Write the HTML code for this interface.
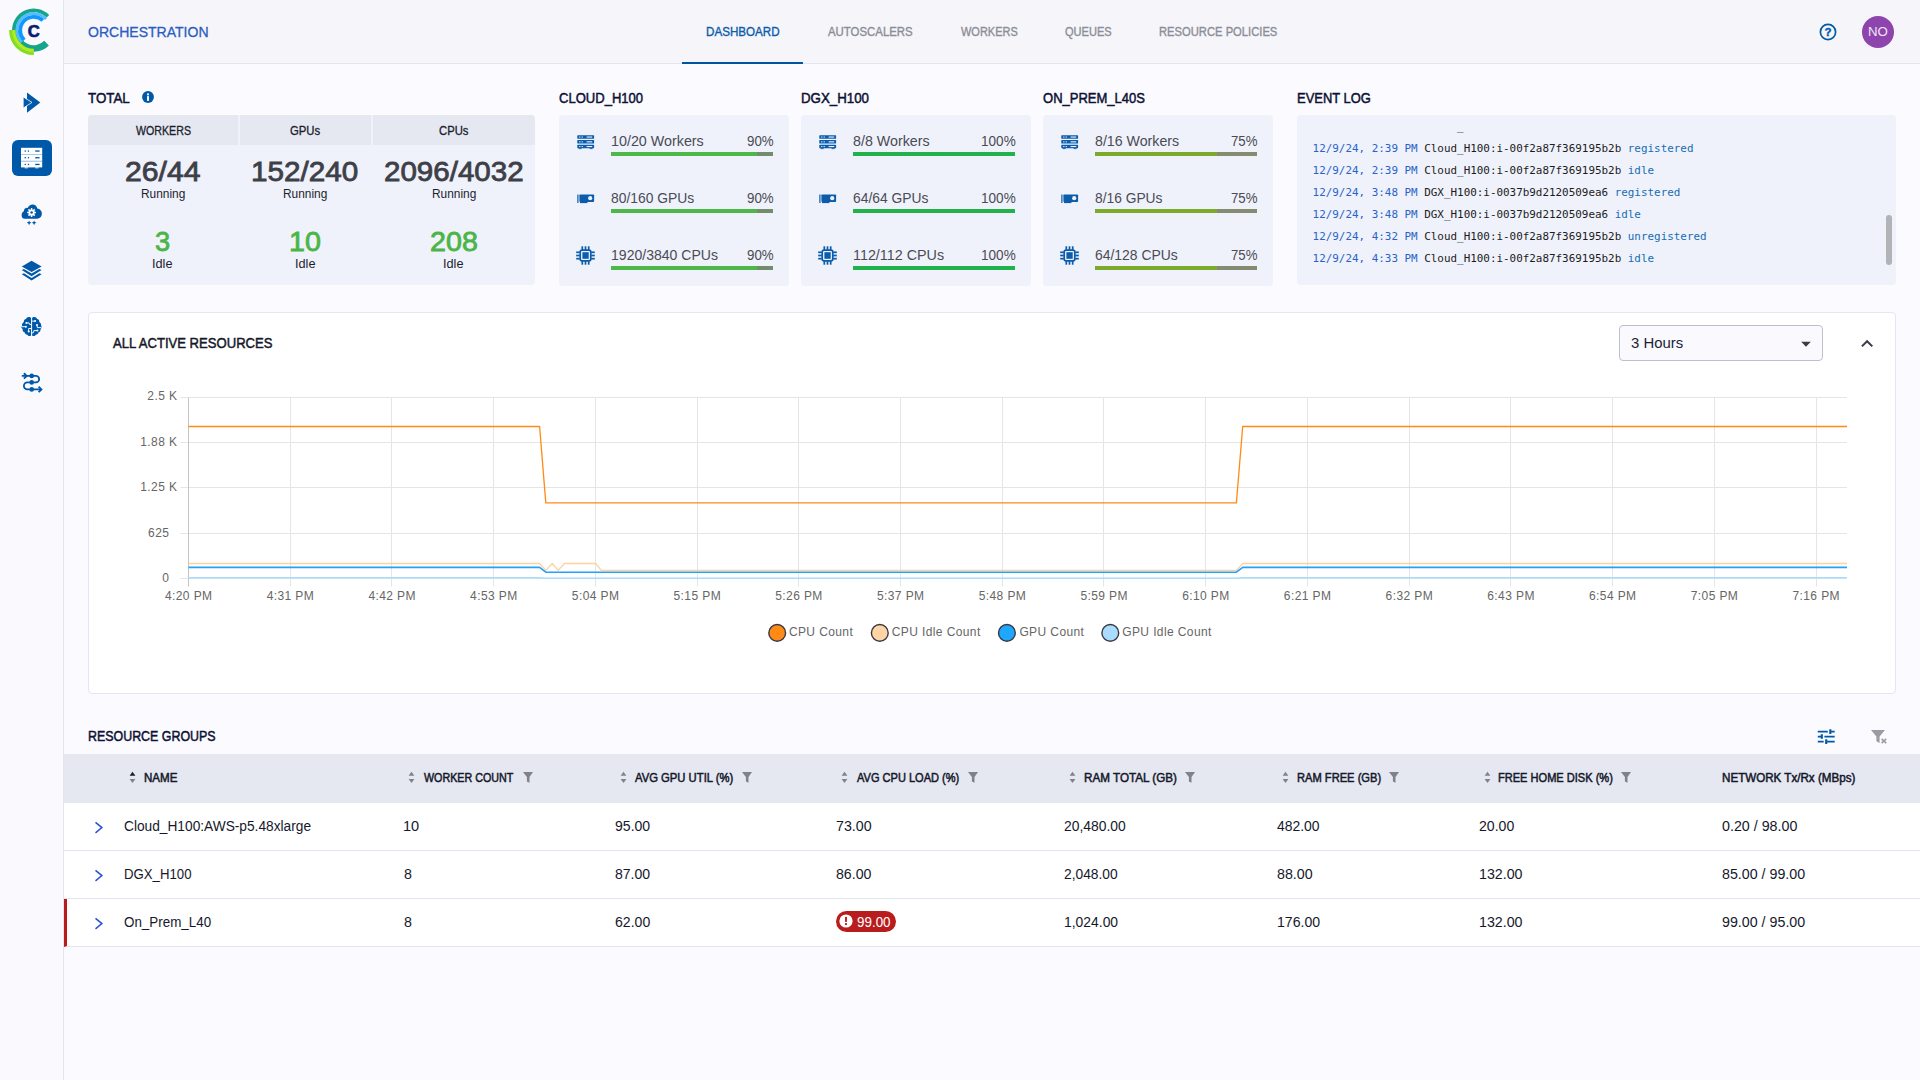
<!DOCTYPE html>
<html lang="en"><head><meta charset="utf-8"><title>Orchestration Dashboard</title>
<style>
*{box-sizing:border-box}
html,body{margin:0;padding:0}
body{width:1920px;height:1080px;overflow:hidden;position:relative;background:#fafaff;font-family:'Liberation Sans',sans-serif;}
div,aside,header,section,nav,svg.a{position:absolute}
.t{position:absolute;display:block;white-space:nowrap;transform-origin:0 0}
.m{font-family:'DejaVu Sans Mono','Liberation Mono',monospace}
</style></head>
<body>
<aside style="left:0;top:0;width:64px;height:1080px;background:#f9f9fe;border-right:1px solid #e3e6f0"><svg class="a" style="left:4px;top:4px" width="56" height="56" viewBox="4 4 56 56">
<g fill="none" transform="translate(33.8,30.4)">
<path d="M14.11,-14.11A19.95,19.95 0 0 0 -19.95,0.35" stroke="#17a589" stroke-width="3.7"/>
<path d="M-18.05,-0.32A18.05,18.05 0 0 0 12.76,12.76" stroke="#17a589" stroke-width="6.5"/>
<path d="M12.21,-11.39A16.7,16.7 0 1 0 -12.01,11.60" stroke="#54bdff" stroke-width="2.9"/>
<path d="M9.03,-10.03A13.5,13.5 0 0 0 -9.55,9.55" stroke="#0d99ff" stroke-width="3.7"/>
<path d="M-23.05,-0.40A23.05,23.05 0 0 0 0.00,23.05" stroke="#80e01e" stroke-width="3.2"/>
<path d="M-19.95,-0.35A19.95,19.95 0 0 0 0.00,19.95" stroke="#b5ea1c" stroke-width="3.1"/>
</g>
<text x="33.7" y="37.3" text-anchor="middle" font-family="'Liberation Sans',sans-serif" font-weight="700" font-size="16.6" fill="#0c1d6b" stroke="#0c1d6b" stroke-width="0.7">C</text>
</svg>
<svg class="a" style="left:12px;top:84px" width="40" height="36" viewBox="12 84 40 36">
<path d="M27,92.4 L40.3,102.4 L27,112.8Z" fill="#0059a8"/>
<path d="M23.2,96.9 L32.0,102.4 L23.2,108.1Z" fill="#0059a8" stroke="#f9f9fe" stroke-width="0.8"/>
</svg>
<div style="left:12px;top:140px;width:40px;height:36px;border-radius:6px;background:#0059a8">
<svg class="a" style="left:0;top:0" width="40" height="36" viewBox="12 140 40 36">
<rect x="21" y="147.8" width="21.2" height="6.3" fill="#fff"/>
<rect x="21" y="154.6" width="21.2" height="6.3" fill="#fff"/>
<rect x="21" y="161.4" width="21.2" height="6.0" fill="#fff"/>
<rect x="21" y="154.1" width="21.2" height="0.6" fill="#cfe2f3"/>
<rect x="21" y="160.9" width="21.2" height="0.6" fill="#cfe2f3"/>
<rect x="24.6" y="167.4" width="3.4" height="0.9" fill="#fff"/><rect x="35.2" y="167.4" width="3.4" height="0.9" fill="#fff"/>
<g fill="#0059a8">
<rect x="24.6" y="150.4" width="1.3" height="1.3"/><rect x="27.8" y="150.4" width="1.3" height="1.3"/><rect x="35.2" y="150.4" width="4.4" height="1.3"/>
<rect x="24.6" y="157.1" width="1.3" height="1.3"/><rect x="27.8" y="157.1" width="1.3" height="1.3"/><rect x="35.2" y="157.1" width="4.4" height="1.3"/>
<rect x="24.6" y="163.8" width="1.3" height="1.3"/><rect x="27.8" y="163.8" width="1.3" height="1.3"/><rect x="35.2" y="163.8" width="4.4" height="1.3"/>
</g></svg></div>
<svg class="a" style="left:12px;top:196px" width="40" height="36" viewBox="12 196 40 36">
<path d="M24.6,218.8C22.6,218.8 21.5,217 21.6,215C21.7,213.2 22.6,212 23.9,211.3C23.7,209.3 25.5,207.6 27.8,207.9C28.6,205.9 30.4,204.5 32.6,204.5C35,204.5 36.8,206.2 37.3,208.4C40,208.6 41.9,210.9 41.9,213.6C41.9,216.5 39.8,218.8 37.2,218.8Z" fill="#0059a8"/>
<g transform="translate(31.6,212.5)"><circle r="3.1" fill="#fff"/>
<g stroke="#fff" stroke-width="1.5"><path d="M0,-4.4V4.4M-4.4,0H4.4M-3.1,-3.1L3.1,3.1M-3.1,3.1L3.1,-3.1"/></g>
<circle r="1.25" fill="#0059a8"/></g>
<path d="M29.1,220.4l0.7,1.7l1.7,0.7l-1.7,0.7l-0.7,1.7l-0.7,-1.7l-1.7,-0.7l1.7,-0.7Z M34.1,220.4l0.7,1.7l1.7,0.7l-1.7,0.7l-0.7,1.7l-0.7,-1.7l-1.7,-0.7l1.7,-0.7Z" fill="#0059a8"/>
</svg>
<svg class="a" style="left:12px;top:252px" width="40" height="36" viewBox="12 252 40 36">
<path d="M31.6,260.7 L41.6,266.5 L31.6,272 L21.8,266.5Z" fill="#0059a8"/>
<path d="M21.8,269.9 L23.9,269.0 L31.6,273.6 L39.4,269.0 L41.6,269.9 L31.6,276.2Z" fill="#0059a8"/>
<path d="M21.8,274.2 L23.9,273.3 L31.6,277.9 L39.4,273.3 L41.6,274.2 L31.6,280.6Z" fill="#0059a8"/>
</svg>
<svg class="a" style="left:12px;top:308px" width="40" height="36" viewBox="12 308 40 36">
<g fill="#0059a8"><path d="M31.05,318.3C31.05,317.3 29.8,316.9 28.7,316.9C27.2,316.9 26.2,317.9 26.1,319.1C24.5,319.2 23.5,320.6 23.9,322.1C22.4,322.9 21.6,324.6 22.1,326.0C21.0,326.6 21.2,328.3 22.6,329.0C22.4,330.9 23.3,332.0 24.6,332.3C24.9,334.0 26.2,334.9 27.4,334.8C28.0,336.2 29.6,336.5 31.05,335.5Z"/><path d="M31.05,318.3C31.05,317.3 29.8,316.9 28.7,316.9C27.2,316.9 26.2,317.9 26.1,319.1C24.5,319.2 23.5,320.6 23.9,322.1C22.4,322.9 21.6,324.6 22.1,326.0C21.0,326.6 21.2,328.3 22.6,329.0C22.4,330.9 23.3,332.0 24.6,332.3C24.9,334.0 26.2,334.9 27.4,334.8C28.0,336.2 29.6,336.5 31.05,335.5Z" transform="translate(63.15,0) scale(-1,1)"/></g>
<g stroke="#fff" stroke-width="0.95" fill="none"><path d="M26.4,322.9H29.1L29.7,324.5H31.0M21.6,326.7H25.8M28.7,331.4V328.5H31.0M35.0,321.1H32.1M37.0,325.2L37.3,327.6H41.4M37.3,330.6H33.9L33.2,332.9H32.1"/></g>
<g fill="#fff"><circle cx="26.4" cy="322.9" r="1.0"/><circle cx="25.9" cy="326.7" r="1.0"/><circle cx="28.7" cy="331.5" r="1.0"/><circle cx="35.1" cy="321.1" r="1.0"/><circle cx="37.0" cy="325.1" r="1.0"/><circle cx="37.4" cy="330.6" r="1.0"/></g>
</svg>
<svg class="a" style="left:12px;top:364px" width="40" height="36" viewBox="12 364 40 36">
<path d="M21.8,375.9H35.9a3.25,3.25 0 0 1 0,6.5H27.4a3.5,3.5 0 0 0 0,7.0H40.4" fill="none" stroke="#0059a8" stroke-width="1.8"/>
<g fill="#0059a8"><circle cx="31.7" cy="375.9" r="2.3"/><circle cx="31.7" cy="382.4" r="2.3"/><circle cx="31.7" cy="389.4" r="2.3"/></g>
<path d="M23.9,373.2L26.7,375.9L23.9,378.6M38.6,386.6L41.4,389.4L38.6,392.2" fill="none" stroke="#0059a8" stroke-width="1.9"/>
</svg></aside>
<header style="left:64px;top:0;width:1856px;height:64px;background:#f5f5fa;border-bottom:1px solid #e3e6f0"><span class="t" style="left:23.98px;top:23.00px;font-size:15px;line-height:17px;color:#2a5cc2;transform:scaleX(0.9350);-webkit-text-stroke:0.3px #2a5cc2;">ORCHESTRATION</span><nav style="left:0;top:0;width:100%;height:64px"><span class="t" style="left:641.96px;top:25.00px;font-size:12.3px;line-height:14px;color:#0b5cab;transform:scaleX(0.9456);-webkit-text-stroke:0.35px #0b5cab;">DASHBOARD</span><span class="t" style="left:763.64px;top:25.00px;font-size:12.3px;line-height:14px;color:#8b8d97;transform:scaleX(0.9272);-webkit-text-stroke:0.35px #8b8d97;">AUTOSCALERS</span><span class="t" style="left:896.61px;top:25.00px;font-size:12.3px;line-height:14px;color:#8b8d97;transform:scaleX(0.8926);-webkit-text-stroke:0.35px #8b8d97;">WORKERS</span><span class="t" style="left:1001.14px;top:25.00px;font-size:12.3px;line-height:14px;color:#8b8d97;transform:scaleX(0.8991);-webkit-text-stroke:0.35px #8b8d97;">QUEUES</span><span class="t" style="left:1095.24px;top:25.00px;font-size:12.3px;line-height:14px;color:#8b8d97;transform:scaleX(0.9114);-webkit-text-stroke:0.35px #8b8d97;">RESOURCE POLICIES</span><div style="left:618px;top:62px;width:121px;height:2px;background:#00539f"></div></nav><svg class="a" style="left:1754.3px;top:22.4px" width="20" height="20" viewBox="-10 -10 20 20">
<circle r="7.6" fill="none" stroke="#0059a8" stroke-width="1.7"/>
<text x="0" y="4.1" text-anchor="middle" font-family="'Liberation Sans',sans-serif" font-weight="700" font-size="11.5" fill="#0059a8" stroke="#0059a8" stroke-width="0.35">?</text></svg><div style="left:1798px;top:16px;width:32px;height:32px;border-radius:50%;background:#8e44ad"><span class="t" style="left:5.82px;top:9.00px;font-size:12px;line-height:14px;color:#f3e6f8;transform:scaleX(1.1010);">NO</span></div></header>
<section style="left:0;top:0"><span class="t" style="left:88.43px;top:88.75px;font-size:15px;line-height:17px;color:#0d1133;transform:scaleX(0.8901);-webkit-text-stroke:0.5px #0d1133;">TOTAL</span><svg class="a" style="left:141.2px;top:90px" width="14" height="14" viewBox="-7 -7 14 14"><circle r="5.95" fill="#0059a8"/><rect x="-0.95" y="-0.9" width="1.9" height="4.8" fill="#fff"/><circle cy="-2.6" r="1.05" fill="#fff"/></svg><div style="left:88px;top:115px;width:447px;height:170px;background:#eff2fb;border-radius:4px"><div style="left:0px;top:0;width:150px;height:30px;background:#e5e8f1;border-radius:4px 0 0 0;"><span class="t" style="left:47.84px;top:9.00px;font-size:12px;line-height:14px;color:#1b1e2e;transform:scaleX(0.8871);-webkit-text-stroke:0.3px #1b1e2e;">WORKERS</span></div><span class="t" style="left:36.93px;top:41.25px;font-size:27.4px;line-height:31px;color:#3e4047;transform:scaleX(1.1014);-webkit-text-stroke:0.8px #3e4047;">26/44</span><span class="t" style="left:52.78px;top:71.25px;font-size:13px;line-height:15px;color:#1b1e2e;transform:scaleX(0.9134);">Running</span><span class="t" style="left:67.11px;top:111.00px;font-size:27.4px;line-height:31px;color:#4cb548;transform:scaleX(0.9953);-webkit-text-stroke:0.8px #4cb548;">3</span><span class="t" style="left:64.46px;top:141.00px;font-size:13px;line-height:15px;color:#1b1e2e;transform:scaleX(0.9772);">Idle</span><div style="left:152px;top:0;width:131px;height:30px;background:#e5e8f1;"><span class="t" style="left:50.08px;top:9.00px;font-size:12px;line-height:14px;color:#1b1e2e;transform:scaleX(0.9433);-webkit-text-stroke:0.3px #1b1e2e;">GPUs</span></div><span class="t" style="left:163.43px;top:41.25px;font-size:27.4px;line-height:31px;color:#3e4047;transform:scaleX(1.0829);-webkit-text-stroke:0.8px #3e4047;">152/240</span><span class="t" style="left:195.28px;top:71.25px;font-size:13px;line-height:15px;color:#1b1e2e;transform:scaleX(0.9134);">Running</span><span class="t" style="left:200.74px;top:111.00px;font-size:27.4px;line-height:31px;color:#4cb548;transform:scaleX(1.0481);-webkit-text-stroke:0.8px #4cb548;">10</span><span class="t" style="left:206.96px;top:141.00px;font-size:13px;line-height:15px;color:#1b1e2e;transform:scaleX(0.9772);">Idle</span><div style="left:285px;top:0;width:162px;height:30px;background:#e5e8f1;border-radius:0 4px 0 0;"><span class="t" style="left:66.08px;top:9.00px;font-size:12px;line-height:14px;color:#1b1e2e;transform:scaleX(0.9395);-webkit-text-stroke:0.3px #1b1e2e;">CPUs</span></div><span class="t" style="left:295.95px;top:41.25px;font-size:27.4px;line-height:31px;color:#3e4047;transform:scaleX(1.0778);-webkit-text-stroke:0.8px #3e4047;">2096/4032</span><span class="t" style="left:343.78px;top:71.25px;font-size:13px;line-height:15px;color:#1b1e2e;transform:scaleX(0.9134);">Running</span><span class="t" style="left:341.73px;top:111.00px;font-size:27.4px;line-height:31px;color:#4cb548;transform:scaleX(1.0465);-webkit-text-stroke:0.8px #4cb548;">208</span><span class="t" style="left:355.46px;top:141.00px;font-size:13px;line-height:15px;color:#1b1e2e;transform:scaleX(0.9772);">Idle</span></div></section>
<section style="left:0;top:0"><span class="t" style="left:559.32px;top:88.75px;font-size:15px;line-height:17px;color:#0d1133;transform:scaleX(0.8693);-webkit-text-stroke:0.5px #0d1133;">CLOUD_H100</span><div style="left:559px;top:115px;width:230px;height:171px;background:#eff2fb;border-radius:4px"><svg class="a" style="left:17.600000000000023px;top:19.599999999999994px" width="18" height="15" viewBox="0 0 18 15">
<g fill="#0b5cab"><rect x="0.3" y="0.2" width="16.8" height="3.6" rx="0.6"/><rect x="0.3" y="5.0" width="16.8" height="3.6" rx="0.6"/><rect x="0.3" y="9.8" width="16.8" height="3.4" rx="0.6"/>
<rect x="1.6" y="13.2" width="3.0" height="0.9"/><rect x="12.6" y="13.2" width="3.0" height="0.9"/></g>
<g fill="#eef1fb"><rect x="2.2" y="1.5" width="1.2" height="1.1"/><rect x="4.6" y="1.5" width="1.2" height="1.1"/><rect x="9.6" y="1.5" width="5.6" height="1.1"/>
<rect x="2.2" y="6.3" width="1.2" height="1.1"/><rect x="4.6" y="6.3" width="1.2" height="1.1"/><rect x="9.6" y="6.3" width="5.6" height="1.1"/>
<rect x="2.2" y="11.0" width="1.2" height="1.1"/><rect x="4.6" y="11.0" width="1.2" height="1.1"/><rect x="9.6" y="11.0" width="5.6" height="1.1"/></g></svg><span class="t" style="left:51.81px;top:18.00px;font-size:14.4px;line-height:16px;color:#4a4b53;transform:scaleX(0.9939);">10/20 Workers</span><span class="t" style="left:187.89px;top:18.00px;font-size:14.4px;line-height:16px;color:#4a4b53;transform:scaleX(0.9259);">90%</span><div style="left:52px;top:37px;width:162.2px;height:4px;background:#748c6e"><div style="left:0;top:0;height:4px;width:146.0px;background:#4db848"></div></div><svg class="a" style="left:18.0px;top:78.80000000000001px" width="18" height="10" viewBox="0 0 18 10">
<g fill="#0b5cab"><rect x="0.3" y="0.5" width="1.2" height="8.5"/><rect x="2.4" y="0.4" width="14.7" height="7.6" rx="0.9"/><rect x="3.0" y="7.8" width="7.4" height="1.3"/></g>
<circle cx="13.2" cy="4.2" r="2.1" fill="#eef1fb"/></svg><span class="t" style="left:52.30px;top:75.00px;font-size:14.4px;line-height:16px;color:#4a4b53;transform:scaleX(0.9624);">80/160 GPUs</span><span class="t" style="left:187.89px;top:75.00px;font-size:14.4px;line-height:16px;color:#4a4b53;transform:scaleX(0.9259);">90%</span><div style="left:52px;top:94px;width:162.2px;height:4px;background:#748c6e"><div style="left:0;top:0;height:4px;width:146.0px;background:#4db848"></div></div><svg class="a" style="left:17.0px;top:131.3px" width="19" height="19" viewBox="0 0 19 19">
<g fill="#0b5cab"><rect x="5.45" y="0.3" width="1.7" height="3.6"/><rect x="5.45" y="15.1" width="1.7" height="3.6"/><rect x="0.2" y="5.45" width="3.6" height="1.7"/><rect x="15.2" y="5.45" width="3.6" height="1.7"/><rect x="8.65" y="0.3" width="1.7" height="3.6"/><rect x="8.65" y="15.1" width="1.7" height="3.6"/><rect x="0.2" y="8.65" width="3.6" height="1.7"/><rect x="15.2" y="8.65" width="3.6" height="1.7"/><rect x="11.85" y="0.3" width="1.7" height="3.6"/><rect x="11.85" y="15.1" width="1.7" height="3.6"/><rect x="0.2" y="11.85" width="3.6" height="1.7"/><rect x="15.2" y="11.85" width="3.6" height="1.7"/></g>
<rect x="4.2" y="4.2" width="10.6" height="10.6" rx="1.9" fill="#eff2fb" stroke="#0b5cab" stroke-width="1.7"/>
<rect x="6.4" y="6.2" width="6.3" height="6.6" fill="#0b5cab"/></svg><span class="t" style="left:51.83px;top:132.00px;font-size:14.4px;line-height:16px;color:#4a4b53;transform:scaleX(0.9763);">1920/3840 CPUs</span><span class="t" style="left:187.89px;top:132.00px;font-size:14.4px;line-height:16px;color:#4a4b53;transform:scaleX(0.9259);">90%</span><div style="left:52px;top:151px;width:162.2px;height:4px;background:#748c6e"><div style="left:0;top:0;height:4px;width:146.0px;background:#4db848"></div></div></div></section><section style="left:0;top:0"><span class="t" style="left:800.88px;top:88.75px;font-size:15px;line-height:17px;color:#0d1133;transform:scaleX(0.8865);-webkit-text-stroke:0.5px #0d1133;">DGX_H100</span><div style="left:801px;top:115px;width:230px;height:171px;background:#eff2fb;border-radius:4px"><svg class="a" style="left:17.600000000000023px;top:19.599999999999994px" width="18" height="15" viewBox="0 0 18 15">
<g fill="#0b5cab"><rect x="0.3" y="0.2" width="16.8" height="3.6" rx="0.6"/><rect x="0.3" y="5.0" width="16.8" height="3.6" rx="0.6"/><rect x="0.3" y="9.8" width="16.8" height="3.4" rx="0.6"/>
<rect x="1.6" y="13.2" width="3.0" height="0.9"/><rect x="12.6" y="13.2" width="3.0" height="0.9"/></g>
<g fill="#eef1fb"><rect x="2.2" y="1.5" width="1.2" height="1.1"/><rect x="4.6" y="1.5" width="1.2" height="1.1"/><rect x="9.6" y="1.5" width="5.6" height="1.1"/>
<rect x="2.2" y="6.3" width="1.2" height="1.1"/><rect x="4.6" y="6.3" width="1.2" height="1.1"/><rect x="9.6" y="6.3" width="5.6" height="1.1"/>
<rect x="2.2" y="11.0" width="1.2" height="1.1"/><rect x="4.6" y="11.0" width="1.2" height="1.1"/><rect x="9.6" y="11.0" width="5.6" height="1.1"/></g></svg><span class="t" style="left:52.29px;top:18.00px;font-size:14.4px;line-height:16px;color:#4a4b53;transform:scaleX(0.9906);">8/8 Workers</span><span class="t" style="left:179.87px;top:18.00px;font-size:14.4px;line-height:16px;color:#4a4b53;transform:scaleX(0.9426);">100%</span><div style="left:52px;top:37px;width:162.2px;height:4px;background:#748c6e"><div style="left:0;top:0;height:4px;width:162.2px;background:#21b24b"></div></div><svg class="a" style="left:18.0px;top:78.80000000000001px" width="18" height="10" viewBox="0 0 18 10">
<g fill="#0b5cab"><rect x="0.3" y="0.5" width="1.2" height="8.5"/><rect x="2.4" y="0.4" width="14.7" height="7.6" rx="0.9"/><rect x="3.0" y="7.8" width="7.4" height="1.3"/></g>
<circle cx="13.2" cy="4.2" r="2.1" fill="#eef1fb"/></svg><span class="t" style="left:52.21px;top:75.00px;font-size:14.4px;line-height:16px;color:#4a4b53;transform:scaleX(0.9612);">64/64 GPUs</span><span class="t" style="left:179.87px;top:75.00px;font-size:14.4px;line-height:16px;color:#4a4b53;transform:scaleX(0.9426);">100%</span><div style="left:52px;top:94px;width:162.2px;height:4px;background:#748c6e"><div style="left:0;top:0;height:4px;width:162.2px;background:#21b24b"></div></div><svg class="a" style="left:17.0px;top:131.3px" width="19" height="19" viewBox="0 0 19 19">
<g fill="#0b5cab"><rect x="5.45" y="0.3" width="1.7" height="3.6"/><rect x="5.45" y="15.1" width="1.7" height="3.6"/><rect x="0.2" y="5.45" width="3.6" height="1.7"/><rect x="15.2" y="5.45" width="3.6" height="1.7"/><rect x="8.65" y="0.3" width="1.7" height="3.6"/><rect x="8.65" y="15.1" width="1.7" height="3.6"/><rect x="0.2" y="8.65" width="3.6" height="1.7"/><rect x="15.2" y="8.65" width="3.6" height="1.7"/><rect x="11.85" y="0.3" width="1.7" height="3.6"/><rect x="11.85" y="15.1" width="1.7" height="3.6"/><rect x="0.2" y="11.85" width="3.6" height="1.7"/><rect x="15.2" y="11.85" width="3.6" height="1.7"/></g>
<rect x="4.2" y="4.2" width="10.6" height="10.6" rx="1.9" fill="#eff2fb" stroke="#0b5cab" stroke-width="1.7"/>
<rect x="6.4" y="6.2" width="6.3" height="6.6" fill="#0b5cab"/></svg><span class="t" style="left:51.81px;top:132.00px;font-size:14.4px;line-height:16px;color:#4a4b53;transform:scaleX(0.9965);">112/112 CPUs</span><span class="t" style="left:179.87px;top:132.00px;font-size:14.4px;line-height:16px;color:#4a4b53;transform:scaleX(0.9426);">100%</span><div style="left:52px;top:151px;width:162.2px;height:4px;background:#748c6e"><div style="left:0;top:0;height:4px;width:162.2px;background:#21b24b"></div></div></div></section><section style="left:0;top:0"><span class="t" style="left:1043.36px;top:88.75px;font-size:15px;line-height:17px;color:#0d1133;transform:scaleX(0.8678);-webkit-text-stroke:0.5px #0d1133;">ON_PREM_L40S</span><div style="left:1043px;top:115px;width:230px;height:171px;background:#eff2fb;border-radius:4px"><svg class="a" style="left:17.59999999999991px;top:19.599999999999994px" width="18" height="15" viewBox="0 0 18 15">
<g fill="#0b5cab"><rect x="0.3" y="0.2" width="16.8" height="3.6" rx="0.6"/><rect x="0.3" y="5.0" width="16.8" height="3.6" rx="0.6"/><rect x="0.3" y="9.8" width="16.8" height="3.4" rx="0.6"/>
<rect x="1.6" y="13.2" width="3.0" height="0.9"/><rect x="12.6" y="13.2" width="3.0" height="0.9"/></g>
<g fill="#eef1fb"><rect x="2.2" y="1.5" width="1.2" height="1.1"/><rect x="4.6" y="1.5" width="1.2" height="1.1"/><rect x="9.6" y="1.5" width="5.6" height="1.1"/>
<rect x="2.2" y="6.3" width="1.2" height="1.1"/><rect x="4.6" y="6.3" width="1.2" height="1.1"/><rect x="9.6" y="6.3" width="5.6" height="1.1"/>
<rect x="2.2" y="11.0" width="1.2" height="1.1"/><rect x="4.6" y="11.0" width="1.2" height="1.1"/><rect x="9.6" y="11.0" width="5.6" height="1.1"/></g></svg><span class="t" style="left:52.29px;top:18.00px;font-size:14.4px;line-height:16px;color:#4a4b53;transform:scaleX(0.9866);">8/16 Workers</span><span class="t" style="left:188.13px;top:18.00px;font-size:14.4px;line-height:16px;color:#4a4b53;transform:scaleX(0.9175);">75%</span><div style="left:52px;top:37px;width:162.2px;height:4px;background:#858b70"><div style="left:0;top:0;height:4px;width:121.6px;background:#7cab2c"></div></div><svg class="a" style="left:18.0px;top:78.80000000000001px" width="18" height="10" viewBox="0 0 18 10">
<g fill="#0b5cab"><rect x="0.3" y="0.5" width="1.2" height="8.5"/><rect x="2.4" y="0.4" width="14.7" height="7.6" rx="0.9"/><rect x="3.0" y="7.8" width="7.4" height="1.3"/></g>
<circle cx="13.2" cy="4.2" r="2.1" fill="#eef1fb"/></svg><span class="t" style="left:52.31px;top:75.00px;font-size:14.4px;line-height:16px;color:#4a4b53;transform:scaleX(0.9583);">8/16 GPUs</span><span class="t" style="left:188.13px;top:75.00px;font-size:14.4px;line-height:16px;color:#4a4b53;transform:scaleX(0.9175);">75%</span><div style="left:52px;top:94px;width:162.2px;height:4px;background:#858b70"><div style="left:0;top:0;height:4px;width:121.6px;background:#7cab2c"></div></div><svg class="a" style="left:17.0px;top:131.3px" width="19" height="19" viewBox="0 0 19 19">
<g fill="#0b5cab"><rect x="5.45" y="0.3" width="1.7" height="3.6"/><rect x="5.45" y="15.1" width="1.7" height="3.6"/><rect x="0.2" y="5.45" width="3.6" height="1.7"/><rect x="15.2" y="5.45" width="3.6" height="1.7"/><rect x="8.65" y="0.3" width="1.7" height="3.6"/><rect x="8.65" y="15.1" width="1.7" height="3.6"/><rect x="0.2" y="8.65" width="3.6" height="1.7"/><rect x="15.2" y="8.65" width="3.6" height="1.7"/><rect x="11.85" y="0.3" width="1.7" height="3.6"/><rect x="11.85" y="15.1" width="1.7" height="3.6"/><rect x="0.2" y="11.85" width="3.6" height="1.7"/><rect x="15.2" y="11.85" width="3.6" height="1.7"/></g>
<rect x="4.2" y="4.2" width="10.6" height="10.6" rx="1.9" fill="#eff2fb" stroke="#0b5cab" stroke-width="1.7"/>
<rect x="6.4" y="6.2" width="6.3" height="6.6" fill="#0b5cab"/></svg><span class="t" style="left:52.20px;top:132.00px;font-size:14.4px;line-height:16px;color:#4a4b53;transform:scaleX(0.9667);">64/128 CPUs</span><span class="t" style="left:188.13px;top:132.00px;font-size:14.4px;line-height:16px;color:#4a4b53;transform:scaleX(0.9175);">75%</span><div style="left:52px;top:151px;width:162.2px;height:4px;background:#858b70"><div style="left:0;top:0;height:4px;width:121.6px;background:#7cab2c"></div></div></div></section>
<section style="left:0;top:0"><span class="t" style="left:1296.90px;top:88.75px;font-size:15px;line-height:17px;color:#0d1133;transform:scaleX(0.8627);-webkit-text-stroke:0.5px #0d1133;">EVENT LOG</span><div style="left:1297px;top:115px;width:598.6px;height:170px;background:#eff2fb;border-radius:4px"><div style="left:0;top:15.5px;width:598px;height:140px;overflow:hidden"><div class="m" style="left:15.6px;top:-10.5px;height:13px;font-size:10.92px;line-height:13px;white-space:pre"><span style="color:#2a62c8">12/9/24, 2:38 PM</span> <span style="color:#1c1c1c">Cloud_H100:i-00f2a87f369195b2b</span> <span style="color:#176cb3">idle</span></div><div class="m" style="left:15.6px;top:11.5px;height:13px;font-size:10.92px;line-height:13px;white-space:pre"><span style="color:#2a62c8">12/9/24, 2:39 PM</span> <span style="color:#1c1c1c">Cloud_H100:i-00f2a87f369195b2b</span> <span style="color:#176cb3">registered</span></div><div class="m" style="left:15.6px;top:33.5px;height:13px;font-size:10.92px;line-height:13px;white-space:pre"><span style="color:#2a62c8">12/9/24, 2:39 PM</span> <span style="color:#1c1c1c">Cloud_H100:i-00f2a87f369195b2b</span> <span style="color:#176cb3">idle</span></div><div class="m" style="left:15.6px;top:55.5px;height:13px;font-size:10.92px;line-height:13px;white-space:pre"><span style="color:#2a62c8">12/9/24, 3:48 PM</span> <span style="color:#1c1c1c">DGX_H100:i-0037b9d2120509ea6</span> <span style="color:#176cb3">registered</span></div><div class="m" style="left:15.6px;top:77.5px;height:13px;font-size:10.92px;line-height:13px;white-space:pre"><span style="color:#2a62c8">12/9/24, 3:48 PM</span> <span style="color:#1c1c1c">DGX_H100:i-0037b9d2120509ea6</span> <span style="color:#176cb3">idle</span></div><div class="m" style="left:15.6px;top:99.5px;height:13px;font-size:10.92px;line-height:13px;white-space:pre"><span style="color:#2a62c8">12/9/24, 4:32 PM</span> <span style="color:#1c1c1c">Cloud_H100:i-00f2a87f369195b2b</span> <span style="color:#176cb3">unregistered</span></div><div class="m" style="left:15.6px;top:121.5px;height:13px;font-size:10.92px;line-height:13px;white-space:pre"><span style="color:#2a62c8">12/9/24, 4:33 PM</span> <span style="color:#1c1c1c">Cloud_H100:i-00f2a87f369195b2b</span> <span style="color:#176cb3">idle</span></div></div><div style="left:589px;top:100.3px;width:6px;height:50px;border-radius:3px;background:#b3b3b7"></div></div></section>
<section style="position:absolute;left:88px;top:312px;width:1808px;height:382px;background:#fff;border:1px solid #e4e7f2;border-radius:4px"><span class="t" style="left:24.49px;top:21.00px;font-size:15px;line-height:17px;color:#15182b;transform:scaleX(0.8723);-webkit-text-stroke:0.5px #15182b;">ALL ACTIVE RESOURCES</span><div style="left:1530px;top:12px;width:204px;height:36px;border:1px solid #bcbfce;border-radius:4px;background:#f9f9fe"><span class="t" style="left:10.73px;top:8.00px;font-size:15px;line-height:17px;color:#1a1e36;transform:scaleX(0.9921);">3 Hours</span><svg class="a" style="left:180.2px;top:13.6px" width="12" height="8" viewBox="0 0 12 8"><path d="M1.2,1.7H10.8L6,6.8Z" fill="#3a3d47"/></svg></div><svg class="a" style="left:1770px;top:24px" width="16" height="12" viewBox="1859 337 16 12"><path d="M1861.9,346.4L1867.1,341.2L1872.3,346.4" fill="none" stroke="#3a3d47" stroke-width="2"/></svg><svg class="a" style="left:-1px;top:-1px" width="1807" height="381" viewBox="88 312 1807 381"><path d="M180.5,397.5H1847.0M180.5,442.5H1847.0M180.5,487.5H1847.0M180.5,533.5H1847.0M180.5,578.5H1847.0M290.5,397.5V586.5M391.5,397.5V586.5M493.5,397.5V586.5M595.5,397.5V586.5M697.5,397.5V586.5M798.5,397.5V586.5M900.5,397.5V586.5M1002.5,397.5V586.5M1103.5,397.5V586.5M1205.5,397.5V586.5M1307.5,397.5V586.5M1409.5,397.5V586.5M1510.5,397.5V586.5M1612.5,397.5V586.5M1714.5,397.5V586.5M1816.5,397.5V586.5" stroke="#e5e5e5" stroke-width="1" fill="none"/><path d="M188.5,397.5V586.5" stroke="#c4c4c4" stroke-width="1" fill="none"/><path d="M188.5,577.8L539.6,577.8L545.8,578.3L1236.4,578.3L1242.7,577.8L1847.0,577.8" stroke="#a9dcfd" stroke-width="1.5" fill="none" stroke-linejoin="round"/><path d="M188.5,563.5L539.6,563.5L545.8,570.4L552.2,563.5L558.2,570.4L564.4,563.5L595.6,563.5L601.3,570.4L1236.4,570.4L1242.7,563.5L1847.0,563.5" stroke="#ffd0a0" stroke-width="1.3" fill="none" stroke-linejoin="round"/><path d="M188.5,567.4L539.6,567.4L545.8,572.2L1236.4,572.2L1242.7,567.4L1847.0,567.4" stroke="#1fa3fb" stroke-width="1.6" fill="none" stroke-linejoin="round"/><path d="M188.5,426.5L539.6,426.5L545.8,502.9L1236.4,502.9L1242.7,426.5L1847.0,426.5" stroke="#ff8a15" stroke-width="1.3" fill="none" stroke-linejoin="round"/><circle cx="777.2" cy="632.9" r="8.4" fill="#ff8a15" stroke="#383842" stroke-width="1.4"/><circle cx="879.8" cy="632.9" r="8.4" fill="#ffd5a8" stroke="#383842" stroke-width="1.4"/><circle cx="1006.9" cy="632.9" r="8.4" fill="#1ea7fd" stroke="#383842" stroke-width="1.4"/><circle cx="1110.3" cy="632.9" r="8.4" fill="#a9dcff" stroke="#383842" stroke-width="1.4"/><g font-family="'Liberation Sans',sans-serif" font-size="12" fill="#666" letter-spacing="0.4"><text x="177.4" y="400.20" text-anchor="end">2.5 K</text><text x="177.4" y="446.10" text-anchor="end">1.88 K</text><text x="177.4" y="491.20" text-anchor="end">1.25 K</text><text x="169.3" y="537.10" text-anchor="end">625</text><text x="169.3" y="582.30" text-anchor="end">0</text><text x="188.70" y="600" text-anchor="middle">4:20 PM</text><text x="290.42" y="600" text-anchor="middle">4:31 PM</text><text x="392.14" y="600" text-anchor="middle">4:42 PM</text><text x="493.86" y="600" text-anchor="middle">4:53 PM</text><text x="595.58" y="600" text-anchor="middle">5:04 PM</text><text x="697.30" y="600" text-anchor="middle">5:15 PM</text><text x="799.02" y="600" text-anchor="middle">5:26 PM</text><text x="900.74" y="600" text-anchor="middle">5:37 PM</text><text x="1002.46" y="600" text-anchor="middle">5:48 PM</text><text x="1104.18" y="600" text-anchor="middle">5:59 PM</text><text x="1205.90" y="600" text-anchor="middle">6:10 PM</text><text x="1307.62" y="600" text-anchor="middle">6:21 PM</text><text x="1409.34" y="600" text-anchor="middle">6:32 PM</text><text x="1511.06" y="600" text-anchor="middle">6:43 PM</text><text x="1612.78" y="600" text-anchor="middle">6:54 PM</text><text x="1714.50" y="600" text-anchor="middle">7:05 PM</text><text x="1816.22" y="600" text-anchor="middle">7:16 PM</text><text x="788.9" y="636.2">CPU Count</text><text x="891.6999999999999" y="636.2">CPU Idle Count</text><text x="1019.4" y="636.2">GPU Count</text><text x="1122.2" y="636.2">GPU Idle Count</text></g></svg></section>
<section style="left:0;top:0"><span class="t" style="left:88.09px;top:727.00px;font-size:15px;line-height:17px;color:#0d1133;transform:scaleX(0.8273);-webkit-text-stroke:0.5px #0d1133;">RESOURCE GROUPS</span><svg class="a" style="left:1815px;top:726px" width="22" height="20" viewBox="1815 726 22 20">
<g stroke="#0059a8" fill="none"><path stroke-width="1.75" d="M1817.8,731.6H1827.8M1830.3,731.6H1834.7M1817.8,736.5H1821.8M1824.4,736.5H1834.7M1817.8,741.5H1823.7M1826.2,741.5H1834.7"/><path stroke-width="2.1" d="M1830.3,729.2V733.9M1821.8,734.2V738.8M1826.2,739.3V743.9"/></g></svg><svg class="a" style="left:1868px;top:726px" width="22" height="20" viewBox="1868 726 22 20">
<path d="M1871.0,730H1885.0L1879.6,736.6V743.0L1876.4,741.2V736.6Z" fill="#9b9ca3"/>
<path d="M1881.6,738.9L1886.2,743.1M1886.2,738.9L1881.6,743.1" stroke="#9b9ca3" stroke-width="1.6" fill="none"/></svg><div style="left:64px;top:754px;width:1856px;height:49px;background:#e5e8f1"><svg class="a" style="left:65.00px;top:17px" width="7" height="13" viewBox="0 0 7 13"><path d="M0.6,4.7L3.5,0.8L6.4,4.7Z" fill="#1b1e2e"/><path d="M0.6,8.1L3.5,12.0L6.4,8.1Z" fill="#7f818b"/></svg><span class="t" style="left:79.99px;top:17.00px;font-size:12px;line-height:14px;color:#15182b;transform:scaleX(0.9650);-webkit-text-stroke:0.5px #15182b;">NAME</span><svg class="a" style="left:344.00px;top:17px" width="7" height="13" viewBox="0 0 7 13"><path d="M0.6,4.7L3.5,0.8L6.4,4.7Z" fill="#7f818b"/><path d="M0.6,8.1L3.5,12.0L6.4,8.1Z" fill="#7f818b"/></svg><span class="t" style="left:360.18px;top:17.00px;font-size:12px;line-height:14px;color:#15182b;transform:scaleX(0.8935);-webkit-text-stroke:0.5px #15182b;">WORKER COUNT</span><svg class="a" style="left:459.20px;top:17px" width="11" height="12" viewBox="0 0 11 12"><path d="M0,1.0H10L6.5,6.0V11.8L3.9,10.4V6.0Z" fill="#7f818b"/></svg><svg class="a" style="left:556.00px;top:17px" width="7" height="13" viewBox="0 0 7 13"><path d="M0.6,4.7L3.5,0.8L6.4,4.7Z" fill="#7f818b"/><path d="M0.6,8.1L3.5,12.0L6.4,8.1Z" fill="#7f818b"/></svg><span class="t" style="left:571.21px;top:17.00px;font-size:12px;line-height:14px;color:#15182b;transform:scaleX(0.9386);-webkit-text-stroke:0.5px #15182b;">AVG GPU UTIL (%)</span><svg class="a" style="left:677.50px;top:17px" width="11" height="12" viewBox="0 0 11 12"><path d="M0,1.0H10L6.5,6.0V11.8L3.9,10.4V6.0Z" fill="#7f818b"/></svg><svg class="a" style="left:777.00px;top:17px" width="7" height="13" viewBox="0 0 7 13"><path d="M0.6,4.7L3.5,0.8L6.4,4.7Z" fill="#7f818b"/><path d="M0.6,8.1L3.5,12.0L6.4,8.1Z" fill="#7f818b"/></svg><span class="t" style="left:792.96px;top:17.00px;font-size:12px;line-height:14px;color:#15182b;transform:scaleX(0.9200);-webkit-text-stroke:0.5px #15182b;">AVG CPU LOAD (%)</span><svg class="a" style="left:903.70px;top:17px" width="11" height="12" viewBox="0 0 11 12"><path d="M0,1.0H10L6.5,6.0V11.8L3.9,10.4V6.0Z" fill="#7f818b"/></svg><svg class="a" style="left:1005.20px;top:17px" width="7" height="13" viewBox="0 0 7 13"><path d="M0.6,4.7L3.5,0.8L6.4,4.7Z" fill="#7f818b"/><path d="M0.6,8.1L3.5,12.0L6.4,8.1Z" fill="#7f818b"/></svg><span class="t" style="left:1019.79px;top:17.00px;font-size:12px;line-height:14px;color:#15182b;transform:scaleX(0.9725);-webkit-text-stroke:0.5px #15182b;">RAM TOTAL (GB)</span><svg class="a" style="left:1121.20px;top:17px" width="11" height="12" viewBox="0 0 11 12"><path d="M0,1.0H10L6.5,6.0V11.8L3.9,10.4V6.0Z" fill="#7f818b"/></svg><svg class="a" style="left:1218.20px;top:17px" width="7" height="13" viewBox="0 0 7 13"><path d="M0.6,4.7L3.5,0.8L6.4,4.7Z" fill="#7f818b"/><path d="M0.6,8.1L3.5,12.0L6.4,8.1Z" fill="#7f818b"/></svg><span class="t" style="left:1232.82px;top:17.00px;font-size:12px;line-height:14px;color:#15182b;transform:scaleX(0.9280);-webkit-text-stroke:0.5px #15182b;">RAM FREE (GB)</span><svg class="a" style="left:1325.30px;top:17px" width="11" height="12" viewBox="0 0 11 12"><path d="M0,1.0H10L6.5,6.0V11.8L3.9,10.4V6.0Z" fill="#7f818b"/></svg><svg class="a" style="left:1420.20px;top:17px" width="7" height="13" viewBox="0 0 7 13"><path d="M0.6,4.7L3.5,0.8L6.4,4.7Z" fill="#7f818b"/><path d="M0.6,8.1L3.5,12.0L6.4,8.1Z" fill="#7f818b"/></svg><span class="t" style="left:1434.07px;top:17.00px;font-size:12px;line-height:14px;color:#15182b;transform:scaleX(0.9214);-webkit-text-stroke:0.5px #15182b;">FREE HOME DISK (%)</span><svg class="a" style="left:1557.30px;top:17px" width="11" height="12" viewBox="0 0 11 12"><path d="M0,1.0H10L6.5,6.0V11.8L3.9,10.4V6.0Z" fill="#7f818b"/></svg><span class="t" style="left:1657.79px;top:17.00px;font-size:12px;line-height:14px;color:#15182b;transform:scaleX(0.9675);-webkit-text-stroke:0.5px #15182b;">NETWORK Tx/Rx (MBps)</span></div><div style="left:64px;top:803px;width:1856px;height:48px;background:#fff;border-bottom:1px solid #e3e6f0;"><svg class="a" style="left:29px;top:17px" width="11" height="15" viewBox="0 0 11 15"><path d="M2.5,2.3L8.9,7.6L2.5,12.9" fill="none" stroke="#2b52cf" stroke-width="1.5"/></svg><span class="t" style="left:59.81px;top:14.80px;font-size:14px;line-height:16px;color:#15182b;transform:scaleX(0.9797);">Cloud_H100:AWS-p5.48xlarge</span><span class="t" style="left:338.90px;top:14.80px;font-size:14px;line-height:16px;color:#15182b;transform:scaleX(1.0378);">10</span><span class="t" style="left:550.85px;top:14.80px;font-size:14px;line-height:16px;color:#15182b;transform:scaleX(1.0044);">95.00</span><span class="t" style="left:772.28px;top:14.80px;font-size:14px;line-height:16px;color:#15182b;transform:scaleX(1.0139);">73.00</span><span class="t" style="left:1000.31px;top:14.80px;font-size:14px;line-height:16px;color:#15182b;transform:scaleX(0.9909);">20,480.00</span><span class="t" style="left:1213.19px;top:14.80px;font-size:14px;line-height:16px;color:#15182b;transform:scaleX(0.9947);">482.00</span><span class="t" style="left:1414.55px;top:14.80px;font-size:14px;line-height:16px;color:#15182b;transform:scaleX(1.0060);">20.00</span><span class="t" style="left:1657.94px;top:14.80px;font-size:14px;line-height:16px;color:#15182b;transform:scaleX(1.0189);">0.20 / 98.00</span></div><div style="left:64px;top:851px;width:1856px;height:48px;background:#fff;border-bottom:1px solid #e3e6f0;"><svg class="a" style="left:29px;top:17px" width="11" height="15" viewBox="0 0 11 15"><path d="M2.5,2.3L8.9,7.6L2.5,12.9" fill="none" stroke="#2b52cf" stroke-width="1.5"/></svg><span class="t" style="left:60.02px;top:14.80px;font-size:14px;line-height:16px;color:#15182b;transform:scaleX(0.9426);">DGX_H100</span><span class="t" style="left:339.69px;top:14.80px;font-size:14px;line-height:16px;color:#15182b;transform:scaleX(1.0182);">8</span><span class="t" style="left:550.90px;top:14.80px;font-size:14px;line-height:16px;color:#15182b;transform:scaleX(1.0031);">87.00</span><span class="t" style="left:772.39px;top:14.80px;font-size:14px;line-height:16px;color:#15182b;transform:scaleX(1.0105);">86.00</span><span class="t" style="left:1000.31px;top:14.80px;font-size:14px;line-height:16px;color:#15182b;transform:scaleX(0.9858);">2,048.00</span><span class="t" style="left:1212.89px;top:14.80px;font-size:14px;line-height:16px;color:#15182b;transform:scaleX(1.0179);">88.00</span><span class="t" style="left:1414.52px;top:14.80px;font-size:14px;line-height:16px;color:#15182b;transform:scaleX(1.0166);">132.00</span><span class="t" style="left:1657.89px;top:14.80px;font-size:14px;line-height:16px;color:#15182b;transform:scaleX(1.0174);">85.00 / 99.00</span></div><div style="left:64px;top:899px;width:1856px;height:48px;background:#fff;border-bottom:1px solid #e3e6f0;border-left:3px solid #b91c1c;"><div style="left:-3px;top:0;width:10px;height:10px"><svg class="a" style="left:29px;top:17px" width="11" height="15" viewBox="0 0 11 15"><path d="M2.5,2.3L8.9,7.6L2.5,12.9" fill="none" stroke="#2b52cf" stroke-width="1.5"/></svg><span class="t" style="left:59.87px;top:14.80px;font-size:14px;line-height:16px;color:#15182b;transform:scaleX(0.9570);">On_Prem_L40</span><span class="t" style="left:339.69px;top:14.80px;font-size:14px;line-height:16px;color:#15182b;transform:scaleX(1.0182);">8</span><span class="t" style="left:550.80px;top:14.80px;font-size:14px;line-height:16px;color:#15182b;transform:scaleX(1.0060);">62.00</span><div style="left:772px;top:12px;width:60px;height:21px;border-radius:10.5px;background:#b91c1c"><svg class="a" style="left:3.3px;top:3.3px" width="14" height="14" viewBox="-7 -7 14 14"><circle r="6.6" fill="#fff"/><rect x="-0.95" y="-4.1" width="1.9" height="5.0" fill="#b91c1c"/><rect x="-0.95" y="2.1" width="1.9" height="1.9" fill="#b91c1c"/></svg><span class="t" style="left:20.98px;top:2.80px;font-size:14px;line-height:16px;color:#fff;transform:scaleX(0.9571);">99.00</span></div><span class="t" style="left:999.94px;top:14.80px;font-size:14px;line-height:16px;color:#15182b;transform:scaleX(0.9926);">1,024.00</span><span class="t" style="left:1212.93px;top:14.80px;font-size:14px;line-height:16px;color:#15182b;transform:scaleX(1.0069);">176.00</span><span class="t" style="left:1414.52px;top:14.80px;font-size:14px;line-height:16px;color:#15182b;transform:scaleX(1.0166);">132.00</span><span class="t" style="left:1657.84px;top:14.80px;font-size:14px;line-height:16px;color:#15182b;transform:scaleX(1.0179);">99.00 / 95.00</span></div></div></section>
</body></html>
